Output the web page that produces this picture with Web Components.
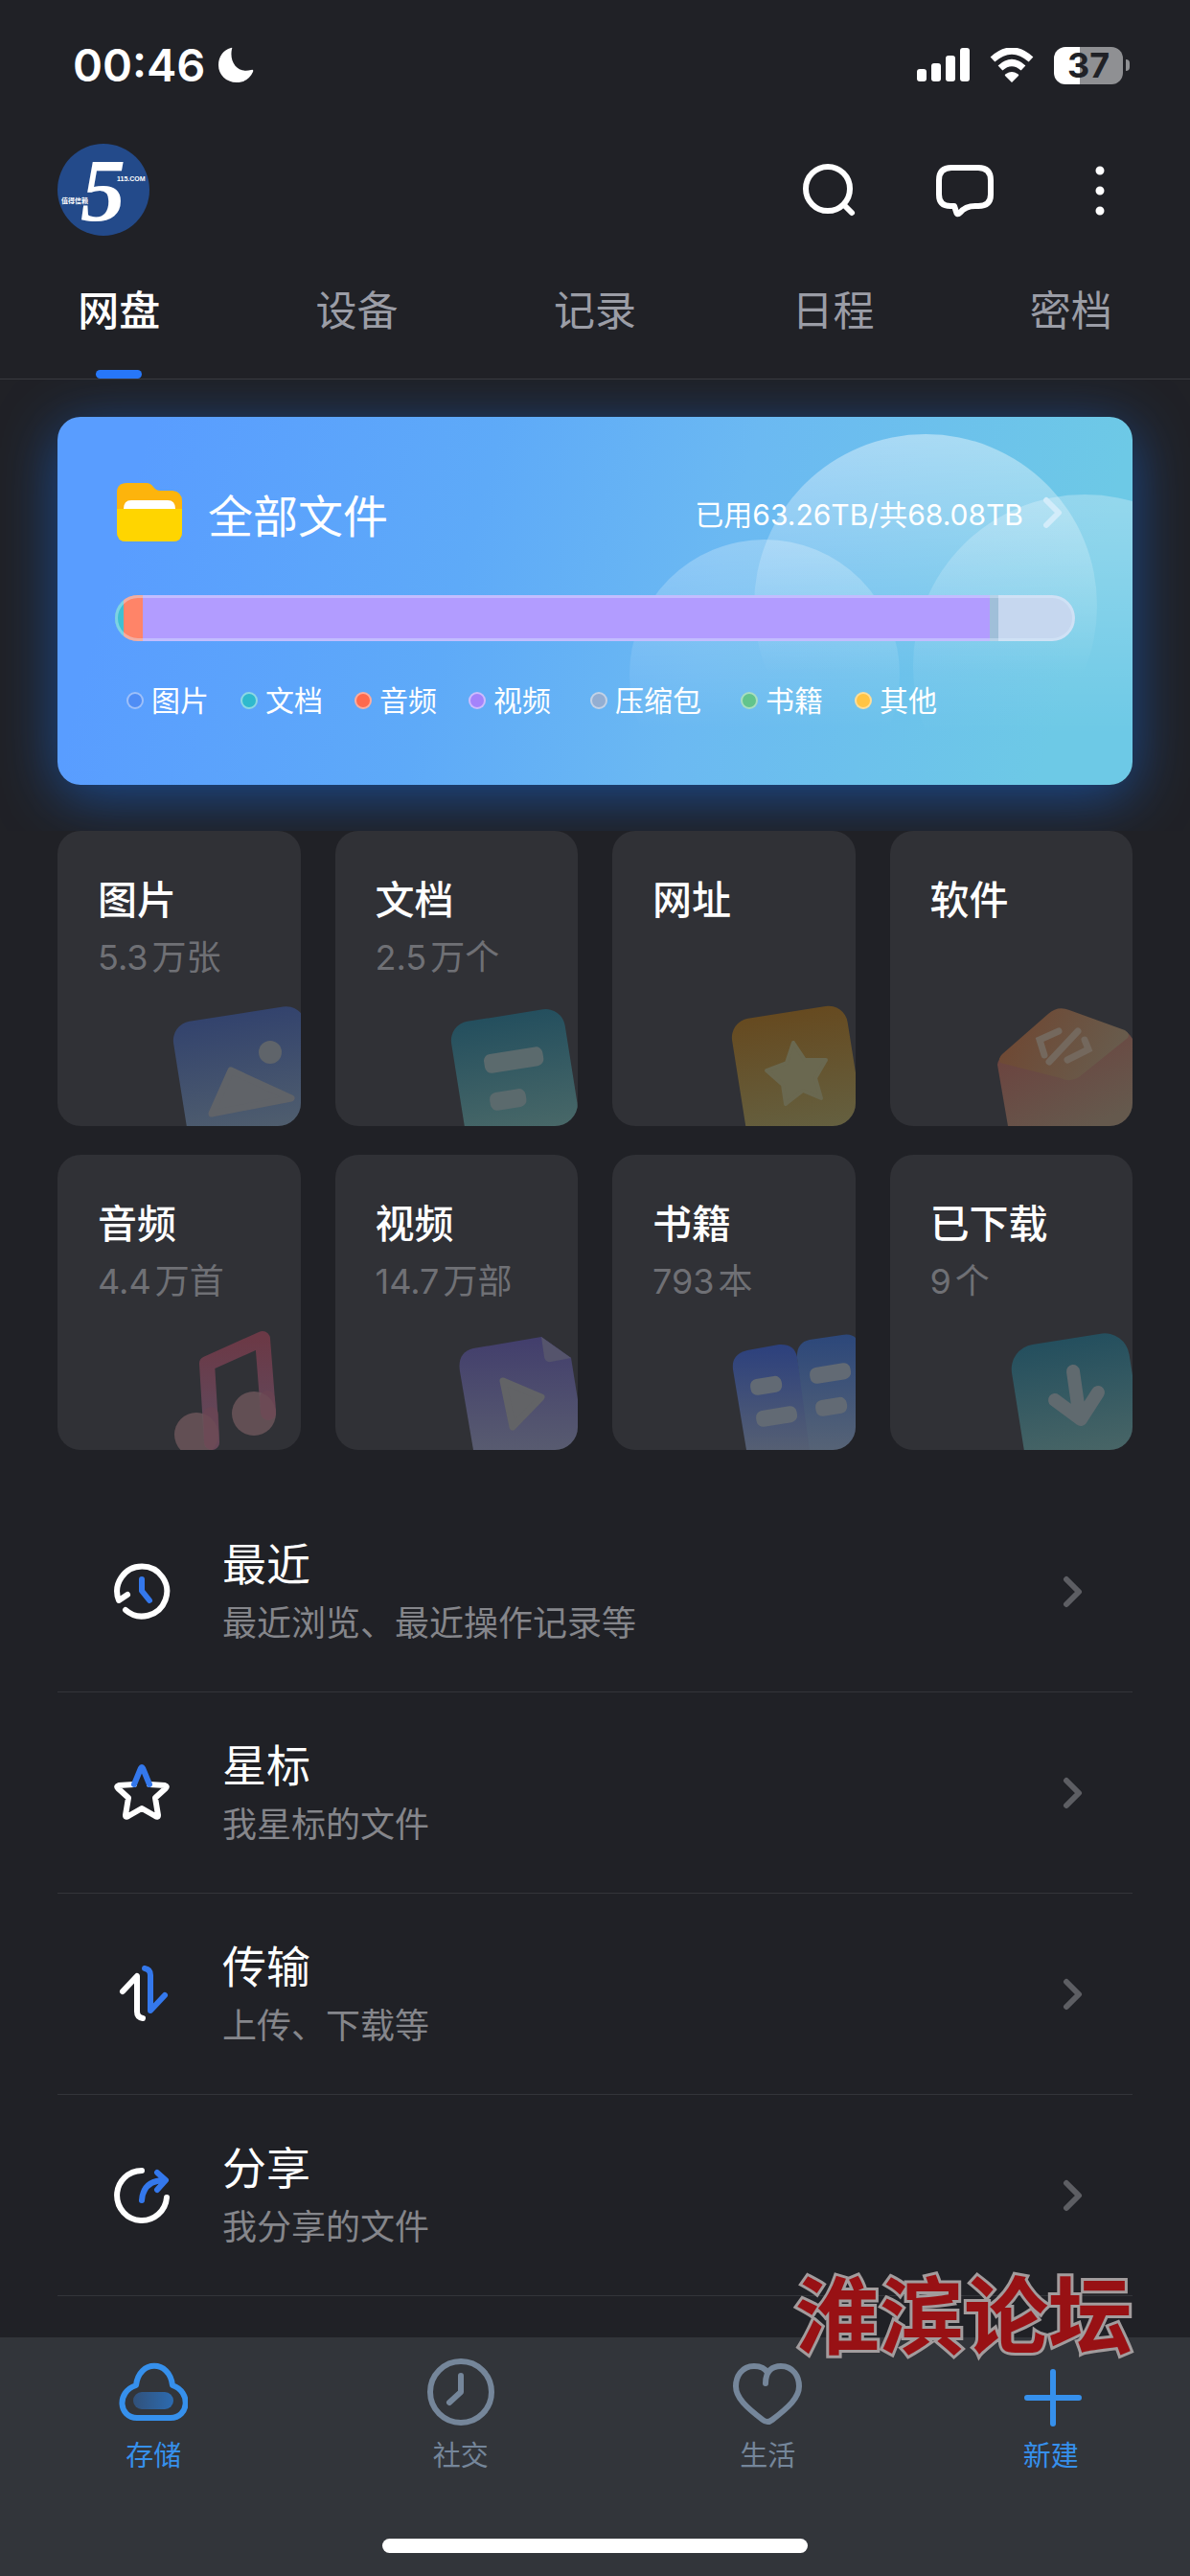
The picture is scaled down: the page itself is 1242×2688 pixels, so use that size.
<!DOCTYPE html>
<html lang="zh-CN">
<head>
<meta charset="utf-8">
<meta name="viewport" content="width=device-width, initial-scale=1">
<title>网盘</title>
<style>
    body {
        margin : 0;
        background : #202126;
        color : #fff;
        font-family : Inter, "Noto Sans CJK SC", sans-serif;
    }
</style>
</head>
<body>
<drive-app>
    <status-bar slot="top" time="00:46" battery="37"></status-bar>
    <app-header slot="top"></app-header>
    <tab-strip slot="top">
        <tab-item active>网盘</tab-item>
        <tab-item>设备</tab-item>
        <tab-item>记录</tab-item>
        <tab-item>日程</tab-item>
        <tab-item>密档</tab-item>
    </tab-strip>

    <storage-card used="63.26TB" total="68.08TB">
        <legend-item color="#4f8df5">图片</legend-item>
        <legend-item color="#2fb9cd">文档</legend-item>
        <legend-item color="#ff6a4d">音频</legend-item>
        <legend-item color="#a483fb">视频</legend-item>
        <legend-item color="#93aed2" wide>压缩包</legend-item>
        <legend-item color="#62c48c">书籍</legend-item>
        <legend-item color="#ffc445">其他</legend-item>
    </storage-card>

    <tile-grid>
        <file-tile label="图片" count="5.3" unit="万张">
            <svg viewBox="-10 0 150 130">
                <linearGradient id="pic" x2="0" y2="1"><stop stop-color="#33436d"/><stop offset="1" stop-color="#55636e"/></linearGradient>
                <rect width="139" height="150" rx="20" transform="translate(4 24) rotate(-9)" fill="url(#pic)"/>
                <circle cx="108" cy="53" r="12" fill="#5f646a"/>
                <path d="M67 72L130 101L47 117Z" fill="#606368" stroke="#606368" stroke-width="7" stroke-linejoin="round"/>
            </svg>
        </file-tile>
        <file-tile label="文档" count="2.5" unit="万个">
            <svg viewBox="-10 0 150 130">
                <linearGradient id="doc" x2="0" y2="1"><stop stop-color="#244f5e"/><stop offset="1" stop-color="#506d6a"/></linearGradient>
                <rect width="120" height="150" rx="20" transform="translate(5 24) rotate(-9)" fill="url(#doc)"/>
                <g fill="#5b6a6d">
                    <rect width="62" height="20" rx="7" transform="translate(41 56) rotate(-9)"/>
                    <rect width="38" height="19" rx="7" transform="translate(47 96) rotate(-9)"/>
                </g>
            </svg>
        </file-tile>
        <file-tile label="网址">
            <svg viewBox="-10 0 150 130">
                <linearGradient id="web" x2="0" y2="1"><stop stop-color="#664a20"/><stop offset="1" stop-color="#646446"/></linearGradient>
                <rect width="122" height="150" rx="20" transform="translate(8 21) rotate(-9)" fill="url(#web)"/>
                <path d="M75 43L87 61L109 61L98 80L104 101L85 93L67 107L64 87L47 72L68 64Z" fill="#6a6850" stroke="#6a6850" stroke-width="4" stroke-linejoin="round"/>
            </svg>
        </file-tile>
        <file-tile label="软件">
            <svg viewBox="-10 0 150 130">
                <linearGradient id="box" x2=".7" y2="1"><stop stop-color="#6d3f3c"/><stop offset="1" stop-color="#65594d"/></linearGradient>
                <linearGradient id="lid" x2="1" y2=".3"><stop stop-color="#70452f"/><stop offset="1" stop-color="#685b4c"/></linearGradient>
                <path d="M-1 66Q0 59 6 56L134 32Q142 38 142 48V130H10Z" fill="url(#box)"/>
                <path d="M4 55L52 13Q62 4 74 9L132 30Q138 34 135 38L84 79Q75 85 65 80L2 64Q-1 60 4 55Z" fill="url(#lid)"/>
                <path d="M63 31L43 40L48 56M83 31L53 63M90 40L94 50L72 61" fill="none" stroke="#74685d" stroke-width="7" stroke-linecap="round"/>
            </svg>
        </file-tile>
        <file-tile label="音频" count="4.4" unit="万首">
            <svg viewBox="-10 0 150 130">
                <linearGradient id="note" x2="0" y2="1"><stop stop-color="#6b3946"/><stop offset="1" stop-color="#5f4b60"/></linearGradient>
                <path d="M47 122L42 40L100 14L106 91" fill="none" stroke="url(#note)" stroke-width="16" stroke-linejoin="round" stroke-linecap="round"/>
                <g fill="#6e575b" fill-opacity=".82">
                    <circle cx="31" cy="114" r="23"/>
                    <circle cx="91" cy="92" r="23"/>
                </g>
                <path d="M46 93L47 122M105 76L106 91" stroke="#6c4552" stroke-opacity=".6" stroke-width="16" stroke-linecap="round"/>
            </svg>
        </file-tile>
        <file-tile label="视频" count="14.7" unit="万部">
            <svg viewBox="-10 0 150 130">
                <linearGradient id="vid" x2="0" y2="1"><stop stop-color="#423e6c"/><stop offset="1" stop-color="#585b70"/></linearGradient>
                <path d="M17 48Q14 28 31 24L102 12L133 34L142 90V130H31Z" fill="url(#vid)"/>
                <path d="M102 12L133 34L112 38Q106 39 105 33Z" fill="#55546c"/>
                <path d="M62 58L102 75L72 106Z" fill="#626366" stroke="#626366" stroke-width="7" stroke-linejoin="round"/>
            </svg>
        </file-tile>
        <file-tile label="书籍" count="793" unit="本">
            <svg viewBox="-10 0 150 130">
                <linearGradient id="pageL" x2="0" y2="1"><stop stop-color="#2c407d"/><stop offset="1" stop-color="#555f73"/></linearGradient>
                <linearGradient id="pageR" x2="0" y2="1"><stop stop-color="#2c477a"/><stop offset="1" stop-color="#566376"/></linearGradient>
                <path d="M12 46Q10 30 27 26L60 20Q76 19 79 33L94 130H26Z" fill="url(#pageL)"/>
                <path d="M79 34Q78 18 92 15L126 10Q138 8 142 16V130H92Z" fill="url(#pageR)"/>
                <g fill="#626a74">
                    <rect width="33" height="17" rx="7" transform="translate(29 57) rotate(-9)"/>
                    <rect width="43" height="17" rx="7" transform="translate(91 45) rotate(-9)"/>
                    <rect width="43" height="17" rx="7" transform="translate(35 90) rotate(-9)"/>
                    <rect width="33" height="17" rx="7" transform="translate(97 79) rotate(-9)"/>
                </g>
            </svg>
        </file-tile>
        <file-tile label="已下载" count="9" unit="个">
            <svg viewBox="-10 0 150 130">
                <linearGradient id="down" x2="0" y2="1"><stop stop-color="#244f5e"/><stop offset="1" stop-color="#506a68"/></linearGradient>
                <rect width="124" height="150" rx="26" transform="translate(10 24) rotate(-9)" fill="url(#down)"/>
                <path d="M78 48L85 97M59 78L86 98L104 70" fill="none" stroke="#606a6f" stroke-width="14" stroke-linecap="round" stroke-linejoin="round"/>
            </svg>
        </file-tile>
    </tile-grid>

    <link-list>
        <link-row label="最近" note="最近浏览、最近操作记录等">
            <svg viewBox="0 0 60 60">
                <path d="M12 49A26 26 0 1 0 5 39L14 33"/>
                <path class="hot" d="M29 17V29L37 39"/>
            </svg>
        </link-row>
        <link-row label="星标" note="我星标的文件">
            <svg viewBox="0 0 60 60">
                <path d="M21 21L5 22Q2 23 4 25L15 35L12 53Q12 56 15 54L29 46L43 54Q46 56 46 53L43 35L54 25Q56 23 53 22L37 21"/>
                <path class="hot" d="M21 21L28 4Q29 2 30 4L37 21"/>
            </svg>
        </link-row>
        <link-row label="传输" note="上传、下载等">
            <svg viewBox="0 0 60 60">
                <path d="M9 27L24 11V48Q24 54 30 55"/>
                <path class="hot" d="M32 3Q38 4 38 10V47L53 31"/>
            </svg>
        </link-row>
        <link-row label="分享" note="我分享的文件">
            <svg viewBox="0 0 60 60">
                <path d="M29 4A26 26 0 1 0 55 32"/>
                <path class="hot" d="M29 35C30 21 38 14 53 14M45 6L54 14L45 24"/>
            </svg>
        </link-row>
    </link-list>

    <nav-bar slot="bottom">
        <nav-item active label="存储">
            <svg viewBox="0 0 72 72">
                <linearGradient id="pill"><stop stop-color="#31517a"/><stop offset="1" stop-color="#2c6bb0"/></linearGradient>
                <path d="M18 29C21 2 53 2 56 29C76 36 73 63 54 63H19C0 63 -3 36 18 29Z"/>
                <rect x="15" y="36" width="42" height="18" rx="9" fill="url(#pill)" stroke="none"/>
            </svg>
        </nav-item>
        <nav-item label="社交">
            <svg viewBox="0 0 72 72"><circle cx="36" cy="36" r="32"/><path d="M36 19V36L24 47"/></svg>
        </nav-item>
        <nav-item label="生活">
            <svg viewBox="0 0 72 72"><path d="M34 27C34 13 42 9 50 9C63 9 69 20 69 30C69 42 58 52 41 65Q36 69 31 65C14 52 3 42 3 30C3 20 9 9 22 9C30 9 34 12 36 16"/></svg>
        </nav-item>
        <nav-item active label="新建">
            <svg viewBox="0 0 72 72"><path d="M38 15V69M11 42H65"/></svg>
        </nav-item>
    </nav-bar>
</drive-app>

<script>
class driveApp extends HTMLElement{
    constructor(){
        super();
        this.shadow = this.attachShadow({mode :'open'});
    }

    connectedCallback(){
        this.shadow.innerHTML = `
        <style>
        :host {
            display : flex;
            flex-direction : column;
            min-height : 100vh;
        }
        main {
            flex : 1;
        }
        footer {
            position : relative;
        }
        /* forum mark, lies over the list and the bottom bar */
        .mark {
            position : absolute;
            right : 60px;
            bottom : 100%;
            margin-bottom : -24px;
            font : 700 88px/104px "Noto Sans CJK SC", sans-serif;
            color : #981114;
            -webkit-text-stroke : 6px #a29c9d;
            paint-order : stroke fill;
            white-space : nowrap;
            pointer-events : none;
        }
        </style>
        <header><slot name="top"></slot></header>
        <main><slot></slot></main>
        <footer>
            <slot name="bottom"></slot>
            <div class="mark">淮滨论坛</div>
        </footer>
        `;
    }
}

class statusBar extends HTMLElement{
    constructor(){
        super();
        this.shadow = this.attachShadow({mode :'open'});
    }

    connectedCallback(){
        var level = this.getAttribute('battery');
        this.shadow.innerHTML = `
        <style>
        :host {
            display : flex;
            align-items : center;
            justify-content : space-between;
            height : 136px;
            padding : 0 63px 0 76px;
        }
        div {
            display : flex;
            align-items : center;
        }
        .left {
            gap : 13px;
        }
        .right {
            gap : 20px;
        }
        time {
            font-size : 47px;
            font-weight : 600;
            line-height : 56px;
        }
        .battery {
            justify-content : center;
            width : 72px;
            height : 39px;
            border-radius : 12px;
            background : linear-gradient(to right, #fff ${level}%, #8f9093 ${level}%);
            color : #202126;
            font-size : 36px;
            font-weight : 700;
        }
        .cell {
            gap : 3px;
        }
        .nub {
            width : 4px;
            height : 12px;
            border-radius : 0 6px 6px 0;
            background : #8f9093;
        }
        svg {
            fill : #fff;
        }
        </style>
        <div class="left">
            <time>${this.getAttribute('time')}</time>
            <svg width="38" height="38" viewBox="0 0 38 38"><path d="M14 1Q16 0 15 2C12 16 21 28 35 24Q38 23 37 26C34 33 28 37 20 37C9 37 1 29 1 19C1 10 6 3 14 1Z"/></svg>
        </div>
        <div class="right">
            <svg width="55" height="36" viewBox="0 0 55 36">
                <rect y="22" width="10" height="13" rx="3"/>
                <rect x="15" y="16" width="10" height="19" rx="3"/>
                <rect x="30" y="8" width="10" height="27" rx="3"/>
                <rect x="45" width="10" height="35" rx="3"/>
            </svg>
            <svg width="48" height="36" viewBox="0 0 48 36">
                <path d="M24 36L17 29Q16 28 18 27Q24 23 30 27Q32 28 31 29Z"/>
                <path d="M4 12Q24 -6 44 12M12 21Q24 10 36 21" fill="none" stroke="#fff" stroke-width="7"/>
            </svg>
            <div class="cell"><div class="battery">${level}</div><span class="nub"></span></div>
        </div>
        `;
    }
}

class appHeader extends HTMLElement{
    constructor(){
        super();
        this.shadow = this.attachShadow({mode :'open'});
    }

    connectedCallback(){
        this.shadow.innerHTML = `
        <style>
        :host {
            display : flex;
            align-items : center;
            justify-content : space-between;
            padding : 14px 64px 0 60px;
        }
        .actions {
            display : flex;
            gap : 81px;
        }
        button {
            padding : 0;
            border : 0;
            background : none;
            color : inherit;
        }
        svg {
            display : block;
            overflow : visible;
        }
        .actions svg {
            width : 60px;
            height : 60px;
            fill : none;
            stroke : #fff;
            stroke-width : 6;
            stroke-linecap : round;
            stroke-linejoin : round;
        }
        .logo {
            font : italic 700 94px "Liberation Serif", serif;
        }
        .tiny {
            font : 700 7px "Liberation Sans", "Noto Sans CJK SC", sans-serif;
        }
        </style>
        <button aria-label="我的">
            <svg width="96" height="96" viewBox="0 0 96 96" fill="#fff">
                <circle cx="48" cy="48" r="48" fill="#234a8a"/>
                <text class="logo" x="24" y="80">5</text>
                <text class="tiny" x="62" y="39">115.COM</text>
                <text class="tiny" x="4" y="62">值得信赖</text>
            </svg>
        </button>
        <div class="actions">
            <button aria-label="搜索"><svg viewBox="0 0 60 60"><circle cx="28" cy="29" r="23"/><path d="M45 46L53 54"/></svg></button>
            <button aria-label="消息"><svg viewBox="0 0 60 60"><path d="M16 7H44Q57 7 57 20V35Q57 47 44 47H41C32 47 28 50 25 54Q22 57 21 53L19 47H15Q3 47 3 35V20Q3 7 16 7Z"/></svg></button>
            <button aria-label="更多"><svg viewBox="0 0 60 60"><path stroke-width="9" d="M30 10V10M30 31V31M30 52V52"/></svg></button>
        </div>
        `;
    }
}

class tabStrip extends HTMLElement{
    constructor(){
        super();
        this.shadow = this.attachShadow({mode :'open'});
    }

    connectedCallback(){
        this.shadow.innerHTML = `
        <style>
        :host {
            display : flex;
            border-bottom : 1px solid #393a3f;
        }
        </style>
        <slot></slot>
        `;
    }
}

class tabItem extends HTMLElement{
    constructor(){
        super();
        this.shadow = this.attachShadow({mode :'open'});
    }

    connectedCallback(){
        this.shadow.innerHTML = `
        <style>
        :host {
            flex : 1;
        }
        button {
            display : flex;
            flex-direction : column;
            align-items : center;
            width : 100%;
            padding : 54px 0 0;
            border : 0;
            background : none;
            color : #9b9da6;
            font : inherit;
            font-size : 43px;
            line-height : 48px;
        }
        button::after {
            content : "";
            width : 48px;
            height : 9px;
            margin-top : 38px;
            border-radius : 5px;
        }
        :host([active]) button {
            color : #fff;
            font-weight : 500;
        }
        :host([active]) button::after {
            background : #2777f8;
        }
        </style>
        <button><slot></slot></button>
        `;
    }
}

class storageCard extends HTMLElement{
    constructor(){
        super();
        this.shadow = this.attachShadow({mode :'open'});
    }

    connectedCallback(){
        this.shadow.innerHTML = `
        <style>
        :host {
            display : block;
            padding : 39px 60px 48px;
            overflow : hidden;
        }
        section {
            position : relative;
            padding : 70px 60px 72px;
            border-radius : 24px;
            background : linear-gradient(105deg, #599dff 8%, #5eaaf8 38%, #6bb9f2 60%, #6dc9e6 92%);
            box-shadow : 0 12px 60px rgba(24, 92, 190, .7);
        }
        .bubbles {
            position : absolute;
            top : 0;
            right : 0;
            height : 100%;
            border-radius : 24px;
        }
        a {
            position : relative;
            display : flex;
            align-items : center;
            height : 60px;
            color : #fff;
            text-decoration : none;
        }
        h2 {
            flex : 1;
            margin : 0 0 0 26px;
            font-size : 47px;
            font-weight : 400;
        }
        .usage {
            margin-right : 20px;
            font-size : 30px;
        }
        .arrow {
            margin-right : 13px;
        }
        .bar {
            position : relative;
            display : flex;
            height : 48px;
            margin-top : 56px;
            border-radius : 24px;
            overflow : hidden;
            background : #c6d7ef;
        }
        .bar::after {
            content : "";
            position : absolute;
            inset : 0;
            border : 3px solid rgba(220, 240, 255, .4);
            border-radius : 24px;
        }
        .legend {
            position : relative;
            display : flex;
            gap : 33px;
            margin-top : 46px;
            padding-left : 12px;
        }
        </style>
        <section>
            <svg class="bubbles" viewBox="0 0 540 384">
                <linearGradient id="fade" x2="0" y2="1"><stop stop-color="#fff" stop-opacity=".42"/><stop offset=".7" stop-color="#fff" stop-opacity="0"/></linearGradient>
                <linearGradient id="soft" x2="0" y2="1"><stop stop-color="#fff" stop-opacity=".27"/><stop offset=".7" stop-color="#fff" stop-opacity="0"/></linearGradient>
                <circle cx="324" cy="197" r="179" fill="url(#fade)"/>
                <circle cx="156" cy="269" r="141" fill="url(#soft)"/>
                <circle cx="490" cy="260" r="179" fill="url(#soft)"/>
            </svg>
            <a href="#files">
                <svg width="71" height="62" viewBox="0 0 71 62">
                    <path d="M12 0H33Q37 0 40 4Q43 8 47 8H60Q70 9 70 19V51Q70 61 60 61H12Q2 61 2 51V10Q2 0 12 0Z" fill="#fdb40c"/>
                    <path d="M2 27H70V51Q70 61 60 61H12Q2 61 2 51Z" fill="#ffd500"/>
                    <path d="M9 27Q9 18 17 18H55Q63 18 63 27Z" fill="#fff"/>
                </svg>
                <h2>全部文件</h2>
                <span class="usage">已用${this.getAttribute('used')}/共${this.getAttribute('total')}</span>
                <svg class="arrow" width="21" height="34" viewBox="0 0 21 34"><path d="M4 4L17 17L4 30" fill="none" stroke="#d2ecfa" stroke-width="6" stroke-linecap="round" stroke-linejoin="round"/></svg>
            </a>
            <div class="bar">
                <span style="flex:9;background:#3fc0d2"></span>
                <span style="flex:20;background:#ff8468"></span>
                <span style="flex:884;background:#b29cff"></span>
                <span style="flex:9;background:#a0bfd9"></span>
                <span style="flex:80"></span>
            </div>
            <div class="legend"><slot></slot></div>
        </section>
        `;
    }
}

class legendItem extends HTMLElement{
    constructor(){
        super();
        this.shadow = this.attachShadow({mode :'open'});
    }

    connectedCallback(){
        this.shadow.innerHTML = `
        <style>
        :host {
            display : flex;
            align-items : center;
            gap : 8px;
            font-size : 30px;
            line-height : 32px;
            white-space : nowrap;
        }
        :host([wide]) {
            padding : 0 8px;
        }
        i {
            box-sizing : border-box;
            width : 18px;
            height : 18px;
            border : 2px solid rgba(255, 255, 255, .45);
            border-radius : 50%;
            background : ${this.getAttribute('color')};
        }
        </style>
        <i></i><slot></slot>
        `;
    }
}

class tileGrid extends HTMLElement{
    constructor(){
        super();
        this.shadow = this.attachShadow({mode :'open'});
    }

    connectedCallback(){
        this.shadow.innerHTML = `
        <style>
        :host {
            display : grid;
            grid-template-columns : repeat(4, 1fr);
            gap : 30px 36px;
            padding : 0 60px;
        }
        </style>
        <slot></slot>
        `;
    }
}

class fileTile extends HTMLElement{
    constructor(){
        super();
        this.shadow = this.attachShadow({mode :'open'});
    }

    connectedCallback(){
        this.shadow.innerHTML = `
        <style>
        button {
            display : flex;
            flex-direction : column;
            width : 100%;
            height : 308px;
            padding : 46px 0 0;
            border : 0;
            border-radius : 24px;
            overflow : hidden;
            background : #303136;
            color : #fff;
            font : inherit;
            text-align : left;
        }
        b, small {
            padding-left : 42px;
        }
        b {
            font-size : 41px;
            font-weight : 500;
            line-height : 52px;
        }
        small {
            display : flex;
            gap : 4px;
            margin-top : 10px;
            color : #6f7075;
            font-size : 36px;
            line-height : 48px;
        }
        ::slotted(svg) {
            width : 150px;
            height : 130px;
            margin-top : auto;
            align-self : flex-end;
        }
        </style>
        <button>
            <b>${this.getAttribute('label')}</b>
            <small><span>${this.getAttribute('count') || ''}</span><span>${this.getAttribute('unit') || ''}</span></small>
            <slot></slot>
        </button>
        `;
    }
}

class linkList extends HTMLElement{
    constructor(){
        super();
        this.shadow = this.attachShadow({mode :'open'});
    }

    connectedCallback(){
        this.shadow.innerHTML = `
        <style>
        :host {
            display : block;
            padding : 43px 60px 40px;
        }
        </style>
        <slot></slot>
        `;
    }
}

class linkRow extends HTMLElement{
    constructor(){
        super();
        this.shadow = this.attachShadow({mode :'open'});
    }

    connectedCallback(){
        this.shadow.innerHTML = `
        <style>
        :host {
            display : block;
        }
        a {
            display : flex;
            align-items : center;
            padding : 40px 52px 39px 59px;
            border-bottom : 1px solid #33353a;
            color : #fff;
            text-decoration : none;
        }
        .text {
            flex : 1;
            display : flex;
            flex-direction : column;
            margin-left : 53px;
            padding-bottom : 6px;
        }
        .label {
            font-size : 46px;
            line-height : 72px;
        }
        .note {
            color : #85868b;
            font-size : 36px;
            line-height : 52px;
        }
        ::slotted(svg) {
            width : 60px;
            height : 60px;
            fill : none;
            stroke : #fff;
            stroke-width : 6;
            stroke-linecap : round;
            stroke-linejoin : round;
        }
        </style>
        <a href="#">
            <slot></slot>
            <span class="text">
                <span class="label">${this.getAttribute('label')}</span>
                <span class="note">${this.getAttribute('note')}</span>
            </span>
            <svg width="21" height="34" viewBox="0 0 21 34"><path d="M4 4L17 17L4 30" fill="none" stroke="#5d5e63" stroke-width="6" stroke-linecap="round" stroke-linejoin="round"/></svg>
        </a>
        `;
        // ::slotted cannot reach inside the icon
        this.querySelectorAll('.hot').forEach(el => el.setAttribute('stroke', '#3478ec'));
    }
}

class navBar extends HTMLElement{
    constructor(){
        super();
        this.shadow = this.attachShadow({mode :'open'});
    }

    connectedCallback(){
        this.shadow.innerHTML = `
        <style>
        :host {
            display : block;
            padding-bottom : 24px;
            background : #32353a;
        }
        nav {
            display : grid;
            grid-template-columns : 32fr 32fr 32fr 27fr;
            padding : 21px 10px 71px 0;
        }
        .home {
            width : 444px;
            height : 15px;
            margin : 0 auto;
            border-radius : 8px;
            background : #fff;
        }
        </style>
        <nav><slot></slot></nav>
        <div class="home"></div>
        `;
    }
}

class navItem extends HTMLElement{
    constructor(){
        super();
        this.shadow = this.attachShadow({mode :'open'});
    }

    connectedCallback(){
        this.shadow.innerHTML = `
        <style>
        button {
            display : flex;
            flex-direction : column;
            align-items : center;
            gap : 16px;
            width : 100%;
            padding : 0;
            border : 0;
            background : none;
            color : #75869a;
            font : inherit;
            font-size : 29px;
            line-height : 30px;
        }
        :host([active]) button {
            color : #3690ec;
        }
        ::slotted(svg) {
            width : 72px;
            height : 72px;
            fill : none;
            stroke : #75869a;
            stroke-width : 6;
            stroke-linecap : round;
            stroke-linejoin : round;
        }
        :host([active]) ::slotted(svg) {
            stroke : #3690ec;
        }
        </style>
        <button><slot></slot><span>${this.getAttribute('label')}</span></button>
        `;
    }
}

customElements.define('drive-app', driveApp);
customElements.define('status-bar', statusBar);
customElements.define('app-header', appHeader);
customElements.define('tab-strip', tabStrip);
customElements.define('tab-item', tabItem);
customElements.define('storage-card', storageCard);
customElements.define('legend-item', legendItem);
customElements.define('tile-grid', tileGrid);
customElements.define('file-tile', fileTile);
customElements.define('link-list', linkList);
customElements.define('link-row', linkRow);
customElements.define('nav-bar', navBar);
customElements.define('nav-item', navItem);
</script>
</body>
</html>
